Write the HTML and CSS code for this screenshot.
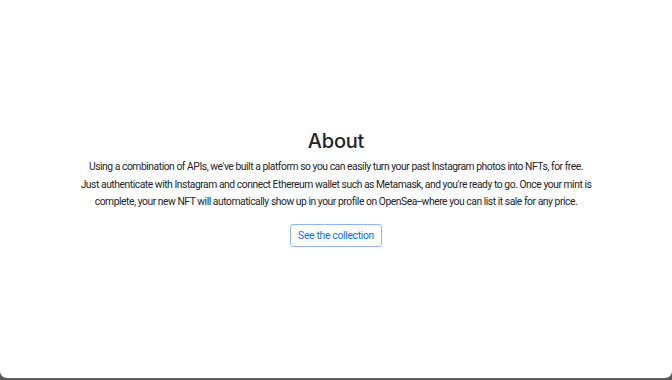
FILE: index.html
```html
<!DOCTYPE html>
<html lang="en">
<head>
  <meta charset="UTF-8" />
  <title>About</title>
  <link rel="stylesheet" href="styles.css">
</head>
<body>
  <div class="window">
    <section class="about">
      <h1>About</h1>
      <p>Using a combination of APIs, we've built a platform so you can easily turn your past Instagram photos into NFTs, for free.</p>
      <p>Just authenticate with Instagram and connect Ethereum wallet such as Metamask, and you're ready to go. Once your mint is complete, your new NFT will automatically show up in your profile on OpenSea--where you can list it sale for any price.</p>
      <a class="btn-outline" href="#">See the collection</a>
    </section>
  </div>
</body>
</html>
```
FILE: styles.css
```css
html, body {
  margin: 0;
  height: 100%;
}
body {
  background: #5c5c5c;
  font-family: 'Roboto', sans-serif;
  font-variant-ligatures: none;
  font-feature-settings: "calt" 0, "liga" 0;
  color: #212529;
}
.window {
  height: 378px;
  background: #fff;
  border-radius: 0 0 7px 7px;
  display: flex;
  align-items: center;
  justify-content: center;
}
.about {
  width: 514px;
  text-align: center;
  margin-bottom: 2px;
}
h1 {
  font-family: 'Inter', sans-serif;
  font-size: 20px;
  font-weight: 500;
  letter-spacing: -0.2px;
  margin: 0 0 5px;
}
p {
  font-size: 10.3px;
  letter-spacing: -0.45px;
  line-height: 17px;
  margin: 0 0 1px;
}
.btn-outline {
  display: inline-block;
  margin-top: 13px;
  padding: 4px 7px;
  font-size: 10.3px;
  letter-spacing: -0.3px;
  line-height: 13px;
  color: #0d6efd;
  text-decoration: none;
  border: 1px solid #86b7fe;
  border-radius: 3px;
}
```
